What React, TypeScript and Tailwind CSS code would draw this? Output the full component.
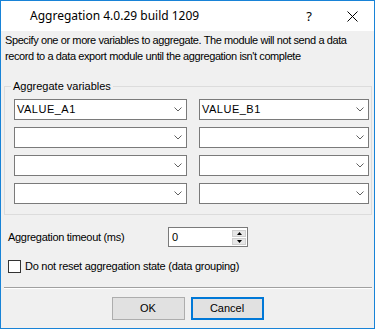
import React from "react";

const body = { fontFamily: '"Liberation Sans", Arial, sans-serif' };

function Chevron() {
  return (
    <svg width="8" height="5" viewBox="0 0 8 5" className="shrink-0">
      <path d="M0.5 0.5 L4 4 L7.5 0.5" fill="none" stroke="#606060" strokeWidth="1" />
    </svg>
  );
}

function Combo({ value, w }: { value?: string; w: string }) {
  return (
    <div className={`${w} h-[21px] border border-[#7a7a7a] bg-white flex items-center pl-[2px] pr-[4px]`}>
      <span className="flex-1 text-[11px] text-black leading-none tracking-[0.5px]">{value}</span>
      <Chevron />
    </div>
  );
}

export default function App() {
  const rows = [
    ["VALUE_A1", "VALUE_B1"],
    ["", ""],
    ["", ""],
    ["", ""],
  ];
  return (
    <div className="w-[375px] h-[329px] border border-t-0 border-[#1883d7] bg-[#f0f0f0] flex flex-col overflow-hidden text-black" style={body}>
      <div className="h-[31px] bg-white flex items-center shrink-0 border-t border-[#1883d7]">
        <span className="ml-[29px] text-[12px]" style={{ fontFamily: '"Noto Sans", "Open Sans", sans-serif' }}>
          Aggregation 4.0.29 build 1209
        </span>
        <span className="ml-auto text-[13px] leading-none" style={{ fontFamily: '"Noto Sans", sans-serif' }}>?</span>
        <svg width="11" height="11" viewBox="0 0 11 11" className="ml-[35px] mr-[16px]">
          <path d="M0.5 0.5 L10.5 10.5 M10.5 0.5 L0.5 10.5" stroke="#000" strokeWidth="1" />
        </svg>
      </div>
      <div className="pl-[4px] pr-[2px] pt-[1px] text-[11px] leading-[16px] tracking-[-0.4px]">
        Specify one or more variables to aggregate. The module will not send a data record to a data export module until the aggregation isn't complete
      </div>
      <div className="relative ml-[3px] mr-[2px] mt-[22px] h-[129px] shrink-0 border border-[#dcdcdc] pl-[9px] pt-[12px]">
        <span className="absolute -top-[8px] left-[6px] bg-[#f0f0f0] px-[2px] text-[11px] leading-[14px]">Aggregate variables</span>
        <div className="flex flex-col gap-[7px]">
          {rows.map((r, i) => (
            <div key={i} className="flex gap-[12px]">
              <Combo value={r[0]} w="w-[173px]" />
              <Combo value={r[1]} w="w-[170px]" />
            </div>
          ))}
        </div>
      </div>
      <div className="flex items-center mt-[12px] pl-[7px] h-[20px] shrink-0">
        <span className="text-[11px] w-[160px] tracking-[-0.3px]">Aggregation timeout (ms)</span>
        <div className="w-[80px] h-[20px] border border-[#7a7a7a] bg-white flex items-center">
          <span className="flex-1 pl-[3px] text-[11px]">0</span>
          <div className="flex flex-col gap-[1px] mr-[1px]">
            <div className="w-[14px] h-[7px] bg-[#e6e6e6] border border-[#cfcfcf] flex items-center justify-center">
              <svg width="5" height="3" viewBox="0 0 5 3"><path d="M2.5 0 L5 3 L0 3 Z" fill="#000" /></svg>
            </div>
            <div className="w-[14px] h-[7px] bg-[#e6e6e6] border border-[#cfcfcf] flex items-center justify-center">
              <svg width="5" height="3" viewBox="0 0 5 3"><path d="M0 0 L5 0 L2.5 3 Z" fill="#000" /></svg>
            </div>
          </div>
        </div>
      </div>
      <div className="flex items-center mt-[13px] pl-[7px] gap-[4px] h-[13px] shrink-0">
        <div className="w-[13px] h-[13px] border border-[#333] bg-white" />
        <span className="text-[11px] tracking-[-0.25px]">Do not reset aggregation state (data grouping)</span>
      </div>
      <div className="ml-[3px] mr-[2px] mt-[14px] h-[1px] bg-[#a0a0a0] border-b border-white box-content shrink-0" />
      <div className="flex justify-center gap-[6px] mt-[8px]">
        <button className="w-[73px] h-[23px] bg-[#e1e1e1] border border-[#adadad] text-[11px]">OK</button>
        <button className="w-[73px] h-[23px] bg-[#e1e1e1] border-2 border-[#0078d7] text-[11px]">Cancel</button>
      </div>
    </div>
  );
}
